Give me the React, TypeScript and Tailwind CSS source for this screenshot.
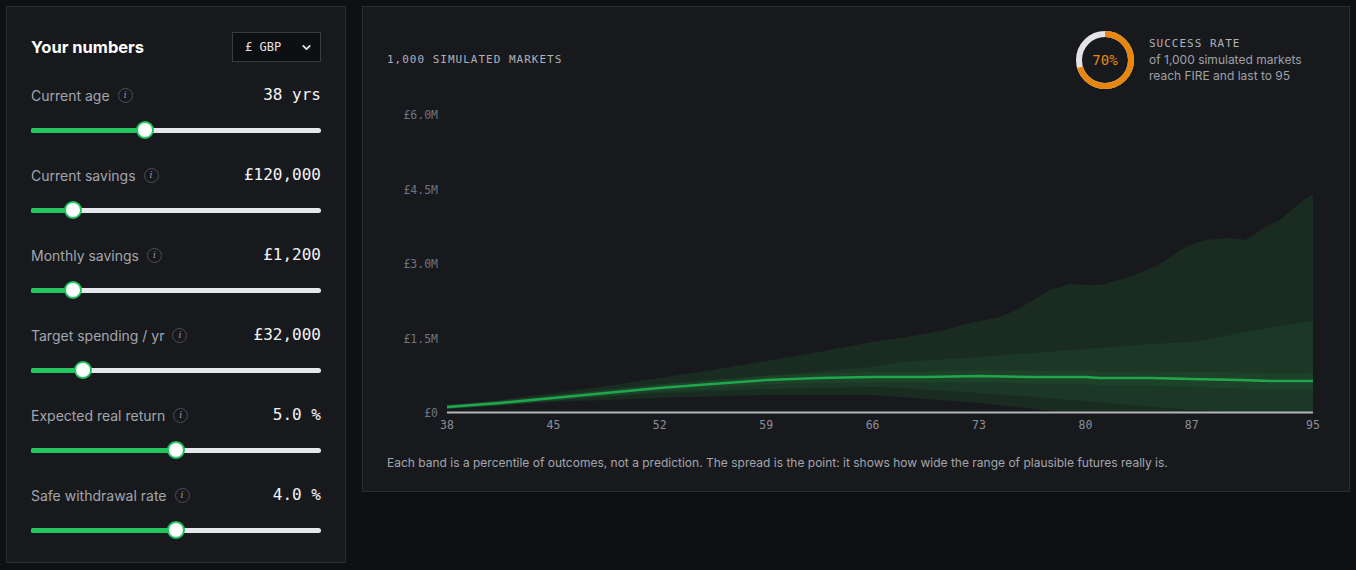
import React from "react";

const mono = "font-['DejaVu_Sans_Mono','Liberation_Mono',monospace]";
const sans = "font-['Inter','Noto_Sans',sans-serif]";

type P = [number, number];

const median: P[] = [[447,407],[500,403],[553,398],[606,393],[659,388],[712,384],[766,380],[819,378],[872,377],[925,377],[979,376],[1032,377],[1060,377],[1085,377],[1100,378],[1150,378],[1191,379],[1240,380],[1270,381],[1313,381]];

const outerTop: P[] = [[447,406],[500,400],[553,393],[606,386],[659,378],[712,370],[766,361],[819,352],[872,342],[900,338],[940,331],[970,323],[1000,317],[1020,308],[1035,299],[1050,290],[1070,284],[1085,285],[1100,285],[1130,277],[1160,264],[1172,256],[1185,247],[1205,240],[1230,238],[1245,240],[1255,234],[1265,227],[1280,220],[1295,207],[1305,199],[1313,194]];

const innerTop: P[] = [[447,407],[553,396],[659,386],[766,376],[872,367],[900,362],[979,357],[1085,349],[1150,344],[1191,342],[1210,339],[1240,333],[1280,326],[1313,321]];

const innerBot: P[] = [[447,408],[553,400],[659,393],[766,389],[872,387],[900,388],[979,393],[1085,401],[1191,410],[1230,412],[1313,412]];

const outerBot: P[] = [[447,408],[553,402],[659,398],[766,395],[872,395],[900,397],[979,403],[1060,412],[1313,412]];

const narrowTop: P[] = median.map(([x, y]) => [x, y - 2 - ((x - 447) / 866) * 6]);
const narrowBot: P[] = median.map(([x, y]) => [x, Math.min(412, y + 2 + ((x - 447) / 866) * 7)]);

const band = (top: P[], bot: P[]) =>
  [...top, ...[...bot].reverse()].map(([x, y]) => `${x},${y}`).join(" ");
const line = (pts: P[]) => pts.map(([x, y], i) => `${i ? "L" : "M"}${x} ${y}`).join(" ");

const yLabels: [string, number][] = [["£6.0M",115],["£4.5M",190],["£3.0M",264],["£1.5M",339],["£0",413]];
const xLabels = [38,45,52,59,66,73,80,87,95];

function Info() {
  return (
    <span className="flex h-[15px] w-[15px] items-center justify-center rounded-full border border-[#4b4e55] text-[9px] italic leading-none text-[#9a9ea6] font-['DejaVu_Serif','Liberation_Serif',serif]">
      i
    </span>
  );
}

function Row({ label, value, pct, first }: { label: string; value: string; pct: number; first?: boolean }) {
  return (
    <div className={first ? "mt-[23px]" : "mt-[27px]"}>
      <div className="flex h-5 items-center justify-between">
        <div className={`flex items-center gap-[8px] text-[14px] text-[#a3a6ad] ${sans}`}>
          <span>{label}</span>
          <Info />
        </div>
        <span className={`text-[16px] font-medium text-[#f4f4f5] ${mono}`}>{value}</span>
      </div>
      <div className="relative mt-[17px] flex h-4 items-center">
        <div className="flex h-[5px] w-full overflow-hidden rounded-full bg-[#e6e7ea]">
          <div className="h-full bg-[#22c55e]" style={{ width: `${pct}%` }} />
        </div>
        <div
          className="absolute top-1/2 h-[18px] w-[18px] -translate-x-1/2 -translate-y-1/2 rounded-full border-[2.5px] border-[#22c55e] bg-white"
          style={{ left: `${pct}%` }}
        />
      </div>
    </div>
  );
}

function Ring() {
  const r = 26;
  const c = 2 * Math.PI * r;
  return (
    <div className="relative h-[60px] w-[60px]">
      <svg width="60" height="60" viewBox="0 0 60 60" className="-rotate-90">
        <circle cx="30" cy="30" r={r} fill="none" stroke="#e4e4e7" strokeWidth="6" />
        <circle cx="30" cy="30" r={r} fill="none" stroke="#e8870f" strokeWidth="6" strokeDasharray={`${c * 0.7} ${c}`} />
      </svg>
      <div className={`absolute inset-0 flex items-center justify-center text-[14px] text-[#e8870f] ${mono}`}>70%</div>
    </div>
  );
}

export default function App() {
  return (
    <div className="flex min-h-[570px] gap-4 bg-[#0f1014] p-[6px]">
      <div className="h-[557px] w-[340px] shrink-0 border border-[#2a2c31] bg-[#18191d] px-6 pt-[25px]">
        <div className="flex h-[30px] items-center justify-between">
          <h2 className={`text-[16.5px] font-bold text-white ${sans}`}>Your numbers</h2>
          <div className="flex h-[30px] w-[89px] items-center justify-between border border-[#3a3c42] bg-[#0e0f12] pl-[12px] pr-[7px]">
            <span className={`text-[12px] text-[#e4e4e7] ${mono}`}>£ GBP</span>
            <svg width="13" height="13" viewBox="0 0 24 24" fill="none" stroke="#e4e4e7" strokeWidth="3.4" strokeLinecap="round" strokeLinejoin="round">
              <path d="M6 9l6 6 6-6" />
            </svg>
          </div>
        </div>
        <Row first label="Current age" value="38 yrs" pct={39.3} />
        <Row label="Current savings" value="£120,000" pct={14.5} />
        <Row label="Monthly savings" value="£1,200" pct={14.5} />
        <Row label="Target spending / yr" value="£32,000" pct={17.9} />
        <Row label="Expected real return" value="5.0 %" pct={50} />
        <Row label="Safe withdrawal rate" value="4.0 %" pct={50} />
      </div>

      <div className="flex h-[486px] flex-1 flex-col self-start border border-[#2a2c31] bg-[#18191d] px-6 pt-[23px]">
        <div className="flex h-[60px] items-center justify-between">
          <span className={`text-[11px] font-medium tracking-[1px] text-[#aeb1b8] ${mono}`}>1,000 SIMULATED MARKETS</span>
          <div className="flex w-[250px] items-center gap-[14px]">
            <Ring />
            <div className="flex flex-col">
              <span className={`text-[11px] font-medium leading-[16px] tracking-[1px] text-[#aeb1b8] ${mono}`}>SUCCESS RATE</span>
              <span className={`text-[12px] leading-[16px] text-[#9ea1a8] ${sans}`}>of 1,000 simulated markets</span>
              <span className={`text-[12px] leading-[16px] text-[#9ea1a8] ${sans}`}>reach FIRE and last to 95</span>
            </div>
          </div>
        </div>
        <svg width="938" height="348" viewBox="387 90 938 348" className="block">
          <polygon points={band(outerTop, outerBot)} fill="#1a2b22" />
          <polygon points={band(innerTop, innerBot)} fill="#1b3726" />
          <polygon points={band(narrowTop, narrowBot)} fill="#1d4229" />
          <path d={line(median)} fill="none" stroke="#1fa84b" strokeWidth="2.5" strokeLinejoin="round" />
          <line x1="447" y1="412.5" x2="1313" y2="412.5" stroke="#b4b6ba" strokeWidth="2" />
          {yLabels.map(([t, y]) => (
            <text key={t} x="438" y={y + 4} textAnchor="end" fontSize="11.5" fill="#6f7380" fontFamily="DejaVu Sans Mono, monospace">{t}</text>
          ))}
          {xLabels.map((v, i) => (
            <text key={v} x={i === 8 ? 1313 : 447 + i * 106.4} y="429" textAnchor="middle" fontSize="11.5" fill="#8b8f98" fontFamily="DejaVu Sans Mono, monospace">{v}</text>
          ))}
        </svg>
        <p className={`mt-[16px] text-[12px] text-[#a3a6ad] ${sans}`}>
          Each band is a percentile of outcomes, not a prediction. The spread is the point: it shows how wide the range of plausible futures really is.
        </p>
      </div>
    </div>
  );
}
